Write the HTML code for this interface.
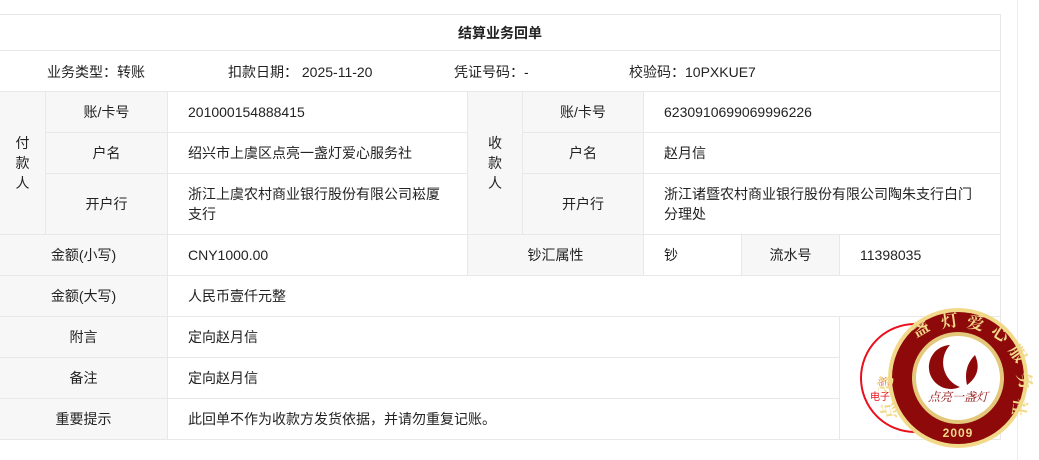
<!DOCTYPE html>
<html><head><meta charset="utf-8"><style>
body{margin:0;width:1039px;height:460px;overflow:hidden;background:#fff;font-family:"Liberation Sans","Noto Sans CJK SC",sans-serif;font-size:14px;color:#222;position:relative}
table{position:absolute;left:-1px;top:14px;border-collapse:collapse;table-layout:fixed;width:1001px}
td{border:1px solid #e8e8e8;padding:0 20px;height:40px;line-height:20px}
.l{background:#f7f7f7;text-align:center;padding:0}
.c{text-align:center;padding:0}
.vl{position:absolute;left:1017px;top:0;width:1px;height:460px;background:#eee}
.s{font-size:17px;font-weight:bold;fill:#f2d98a;font-family:"Noto Serif CJK SC",serif}
</style></head><body>
<div class="vl"></div>
<table>
<colgroup><col style="width:46px"><col style="width:122px"><col style="width:300px"><col style="width:55px"><col style="width:121px"><col style="width:98px"><col style="width:98px"><col style="width:161px"></colgroup>
<tr><td colspan="8" class="c" style="height:35px;font-weight:bold">结算业务回单</td></tr>
<tr><td colspan="8" style="padding:0;position:relative;height:40px">
<span style="position:absolute;left:47px;top:11px">业务类型：转账</span>
<span style="position:absolute;left:228px;top:11px">扣款日期：&nbsp;2025-11-20</span>
<span style="position:absolute;left:454px;top:11px">凭证号码：-</span>
<span style="position:absolute;left:629px;top:11px">校验码：10PXKUE7</span>
</td></tr>
<tr><td rowspan="3" class="l">付<br>款<br>人</td><td class="l">账/卡号</td><td>201000154888415</td><td rowspan="3" class="l">收<br>款<br>人</td><td class="l">账/卡号</td><td colspan="3">6230910699069996226</td></tr>
<tr><td class="l">户名</td><td>绍兴市上虞区点亮一盏灯爱心服务社</td><td class="l">户名</td><td colspan="3">赵月信</td></tr>
<tr><td class="l" style="height:60px">开户行</td><td>浙江上虞农村商业银行股份有限公司崧厦支行</td><td class="l">开户行</td><td colspan="3">浙江诸暨农村商业银行股份有限公司陶朱支行白门分理处</td></tr>
<tr><td colspan="2" class="l">金额(小写)</td><td>CNY1000.00</td><td colspan="2" class="l">钞汇属性</td><td>钞</td><td class="l">流水号</td><td>11398035</td></tr>
<tr><td colspan="2" class="l">金额(大写)</td><td colspan="6">人民币壹仟元整</td></tr>
<tr><td colspan="2" class="l">附言</td><td colspan="5">定向赵月信</td><td rowspan="3"></td></tr>
<tr><td colspan="2" class="l">备注</td><td colspan="5">定向赵月信</td></tr>
<tr><td colspan="2" class="l">重要提示</td><td colspan="5">此回单不作为收款方发货依据，并请勿重复记账。</td></tr>
</table>
<svg style="position:absolute;left:850px;top:300px" width="189" height="160" viewBox="850 300 189 160">
<circle cx="915" cy="378" r="54" fill="#fff" stroke="#e8101c" stroke-width="2"/>
<text x="878" y="385" font-size="9" fill="#e8101c" font-family="Noto Serif CJK SC,serif">浙江上</text>
<text x="870" y="400" font-size="10" fill="#e8101c">电子</text>
<circle cx="958" cy="378" r="70" fill="#f2d98a"/>
<circle cx="958" cy="378" r="66" fill="#8e0a0a"/>
<circle cx="958" cy="378" r="46" fill="#e3c77a"/>
<circle cx="958" cy="378" r="42" fill="#fff"/>
<path d="M950 345 a22 22 0 1 0 10 42 a26 26 0 0 1 -10 -42z" fill="#8e0a0a"/>
<path d="M975 355 q8 18 -8 30 q-4 -18 8 -30z" fill="#8e0a0a"/>
<text x="958" y="401" text-anchor="middle" font-size="12" fill="#8e0a0a" font-style="italic" font-family="Noto Serif CJK SC,serif">点亮一盏灯</text>
<text x="958" y="437" text-anchor="middle" font-size="12" font-weight="bold" fill="#f2d98a" letter-spacing="1">2009</text>
<text class="s" x="916" y="338" transform="rotate(-30 916 338)">盏</text>
<text class="s" x="942" y="328" transform="rotate(-8 942 328)">灯</text>
<text class="s" x="966" y="327" transform="rotate(12 966 327)">爱</text>
<text class="s" x="990" y="334" transform="rotate(32 990 334)">心</text>
<text class="s" x="1008" y="350" transform="rotate(55 1008 350)">服</text>
<text class="s" x="1017" y="374" transform="rotate(75 1017 374)">务</text>
<text class="s" x="1015" y="398" transform="rotate(100 1015 398)">社</text>
<text class="s" x="898" y="362" transform="rotate(-60 898 362)">一</text>
<text class="s" x="890" y="394" transform="rotate(-80 890 394)">亮</text>
<text class="s" x="896" y="418" transform="rotate(-100 896 418)">点</text>
</svg>
</body></html>
